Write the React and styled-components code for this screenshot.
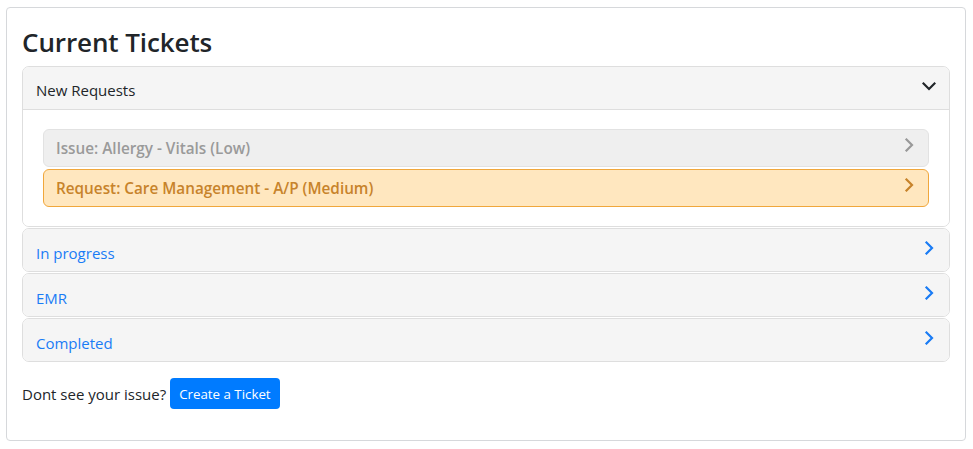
import React, { useState } from 'react';
import styled, { createGlobalStyle } from 'styled-components';

const GlobalStyle = createGlobalStyle`
  *, *::before, *::after {
    box-sizing: border-box;
  }
  body {
    margin: 0;
    padding: 7px 7px 0 6px;
    background: #fff;
    font-family: "Open Sans", "Noto Sans", sans-serif;
    color: #212529;
  }
`;

const groups = [
  {
    title: 'New Requests',
    tickets: [
      { label: 'Issue: Allergy - Vitals (Low)', tone: 'low' },
      { label: 'Request: Care Management - A/P (Medium)', tone: 'medium' },
    ],
  },
  { title: 'In progress', tickets: [] },
  { title: 'EMR', tickets: [] },
  { title: 'Completed', tickets: [] },
];

const tones = {
  low: { bg: '#efefef', border: '#e2e2e2', text: '#9a9a9a', icon: '#999' },
  medium: { bg: '#ffe7bf', border: '#f0a73c', text: '#c7832b', icon: '#c7832b' },
};

// chevron drawn as svg so stroke weight matches
const Chevron = ({ down, color }) => (
  <svg width="14" height="14" viewBox="0 0 14 14">
    <path
      d={down ? 'M1.5 4.5 L7 10 L12.5 4.5' : 'M4.5 1.5 L10 7 L4.5 12.5'}
      fill="none"
      stroke={color}
      strokeWidth="2.2"
      strokeLinecap="square"
    />
  </svg>
);

export default function App() {
  const [open, setOpen] = useState(0);

  return (
    <>
      <GlobalStyle />
      <Card>
        <Title>Current Tickets</Title>
        <Accordion>
          {groups.map((group, index) => {
            const isOpen = open === index;
            return (
              <Panel key={group.title}>
                <PanelHeader
                  $open={isOpen}
                  onClick={() => setOpen(isOpen ? -1 : index)}
                >
                  <HeaderText $open={isOpen}>{group.title}</HeaderText>
                  <Chevron down={isOpen} color={isOpen ? '#212529' : '#1a7cf5'} />
                </PanelHeader>
                {isOpen && (
                  <PanelBody>
                    {group.tickets.map((ticket) => (
                      <Ticket key={ticket.label} $tone={ticket.tone}>
                        <span>{ticket.label}</span>
                        <Chevron color={tones[ticket.tone].icon} />
                      </Ticket>
                    ))}
                  </PanelBody>
                )}
              </Panel>
            );
          })}
        </Accordion>
        <Footer>
          Dont see your issue?
          <CreateButton type="button">Create a Ticket</CreateButton>
        </Footer>
      </Card>
    </>
  );
}

const Card = styled.div`
  width: 960px;
  height: 434px;
  border: 1px solid #d6d8db;
  border-radius: 4px;
  padding: 16px 15px 0 15px;
`;

const Title = styled.h3`
  margin: 0 0 5px 0;
  font-size: 26px;
  font-weight: 600;
  line-height: 37px;
  letter-spacing: -0.1px;
`;

const Accordion = styled.div`
  display: flex;
  flex-direction: column;
  gap: 1px;
`;

const Panel = styled.div`
  border: 1px solid #dedede;
  border-radius: 7px;
  overflow: hidden;
`;

const PanelHeader = styled.div`
  height: ${(p) => (p.$open ? '43px' : '42px')};
  display: flex;
  align-items: center;
  justify-content: space-between;
  padding: 0 13px 0 13px;
  background: #f5f5f5;
  border-bottom: ${(p) => (p.$open ? '1px solid #dedede' : 'none')};
  cursor: pointer;

  svg {
    margin-top: ${(p) => (p.$open ? '-4px' : '-5px')};
  }
`;

const HeaderText = styled.span`
  font-size: 15px;
  color: ${(p) => (p.$open ? '#212529' : '#1a7cf5')};
  margin-top: ${(p) => (p.$open ? '4px' : '6px')};
`;

const PanelBody = styled.div`
  padding: 19px 20px 19px 20px;
  background: #fff;
  display: flex;
  flex-direction: column;
  gap: 2px;
`;

const Ticket = styled.div`
  height: 38px;
  display: flex;
  align-items: center;
  justify-content: space-between;
  padding: 0 12px 0 12px;
  background: ${(p) => tones[p.$tone].bg};
  border: 1px solid ${(p) => tones[p.$tone].border};
  border-radius: 6px;
  color: ${(p) => tones[p.$tone].text};
  font-size: 15.3px;
  font-weight: 600;

  svg {
    margin-top: -6px;
  }
`;

const Footer = styled.div`
  display: flex;
  align-items: center;
  gap: 4px;
  margin-top: 16px;
  font-size: 15px;
`;

const CreateButton = styled.button`
  height: 31px;
  padding: 0 9px;
  border: none;
  border-radius: 4px;
  background: #007bff;
  color: #fff;
  font-family: inherit;
  font-size: 13.3px;
  cursor: pointer;
`;
